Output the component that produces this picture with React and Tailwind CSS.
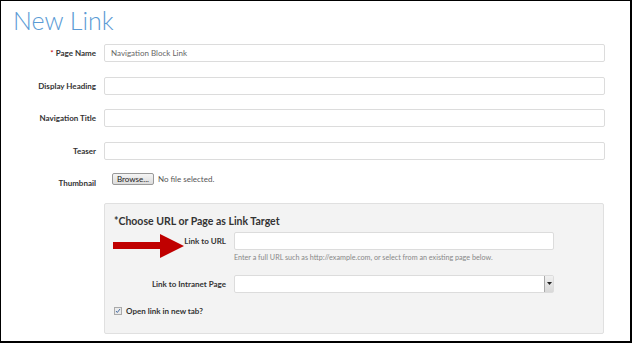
import React from 'react';

const font = { fontFamily: 'Lato, "Open Sans", sans-serif' };

function Row({ label, required, children }) {
  return (
    <div className="flex items-center h-[18px]">
      <div className="w-[95px] text-right text-[8px] font-bold text-[#333]">
        {required && <span className="text-[#c00] font-normal mr-[2px]">*</span>}
        {label}
      </div>
      <div className="ml-[8px] flex-1 flex items-center">{children}</div>
    </div>
  );
}

function TextBox({ value }) {
  return (
    <div className="h-[18px] w-full border border-[#dcdcdc] rounded-[2px] bg-white px-[6px] flex items-center text-[8px] text-[#666]">
      {value}
    </div>
  );
}

export default function App() {
  return (
    <div
      className="w-[632px] h-[343px] bg-white border-t border-l border-r-2 border-b-2 border-black overflow-hidden relative"
      style={font}
    >
      <h1 className="pl-[12px] pt-[4px] text-[25px] leading-[30px] font-light text-[#5b9bd5]">New Link</h1>

      <div className="pr-[25px] mt-[9px] flex flex-col gap-[14.6px]">
        <Row label="Page Name" required>
          <TextBox value="Navigation Block Link" />
        </Row>
        <Row label="Display Heading">
          <TextBox />
        </Row>
        <Row label="Navigation Title">
          <TextBox />
        </Row>
        <Row label="Teaser">
          <TextBox />
        </Row>
        <Row label="Thumbnail">
          <div className="flex items-center ml-[8px] mt-[-8px]">
            <div className="h-[12px] px-[4px] border border-[#999] rounded-[2px] bg-gradient-to-b from-[#f5f5f5] to-[#dcdcdc] text-[8px] leading-[10px] text-[#222] flex items-center">
              Browse...
            </div>
            <span className="ml-[4px] text-[8px] text-[#555]">No file selected.</span>
          </div>
        </Row>
      </div>

      <div className="ml-[103px] mr-[26px] mt-[11px] h-[131px] bg-[#f3f3f3] border border-[#e0e0e0] rounded-[2px] px-[9px] pt-[10px]">
        <div className="text-[10.5px] font-bold text-[#333] leading-[14px]">*Choose URL or Page as Link Target</div>
        <div className="flex items-center mt-[4px] h-[18px]">
          <div className="w-[112px] text-right text-[8px] font-bold text-[#333]">Link to URL</div>
          <div className="ml-[8px] w-[320px]">
            <TextBox />
          </div>
        </div>
        <div className="ml-[120px] mt-[3px] text-[7.2px] text-[#888] leading-[10px]">
          Enter a full URL such as http://example.com, or select from an existing page below.
        </div>
        <div className="flex items-center mt-[12px] h-[18px]">
          <div className="w-[112px] text-right text-[8px] font-bold text-[#333]">Link to Intranet Page</div>
          <div className="ml-[8px] w-[320px] h-[18px] border border-[#dcdcdc] rounded-[2px] bg-white flex justify-end">
            <div className="w-[9px] h-full border-l border-[#aaa] bg-gradient-to-b from-[#f0f0f0] to-[#d8d8d8] flex items-center justify-center">
              <svg width="5" height="4" viewBox="0 0 5 4">
                <path d="M0 0h5L2.5 3z" fill="#222" />
              </svg>
            </div>
          </div>
        </div>
        <div className="flex items-center mt-[12px]">
          <div className="w-[8px] h-[8px] border border-[#aaa] bg-[#eaeaea] flex items-center justify-center">
            <svg width="6" height="6" viewBox="0 0 6 6">
              <path d="M1 3l1.3 1.5L5 1" stroke="#4a6fa5" strokeWidth="1" fill="none" />
            </svg>
          </div>
          <span className="ml-[4px] text-[8px] font-bold text-[#333]">Open link in new tab?</span>
        </div>
      </div>

      <svg className="absolute left-[112px] top-[233px]" width="72" height="25" viewBox="0 0 72 25">
        <path d="M0 8h47V0l24 12L47 24V15H0z" fill="#c00000" />
      </svg>
    </div>
  );
}
